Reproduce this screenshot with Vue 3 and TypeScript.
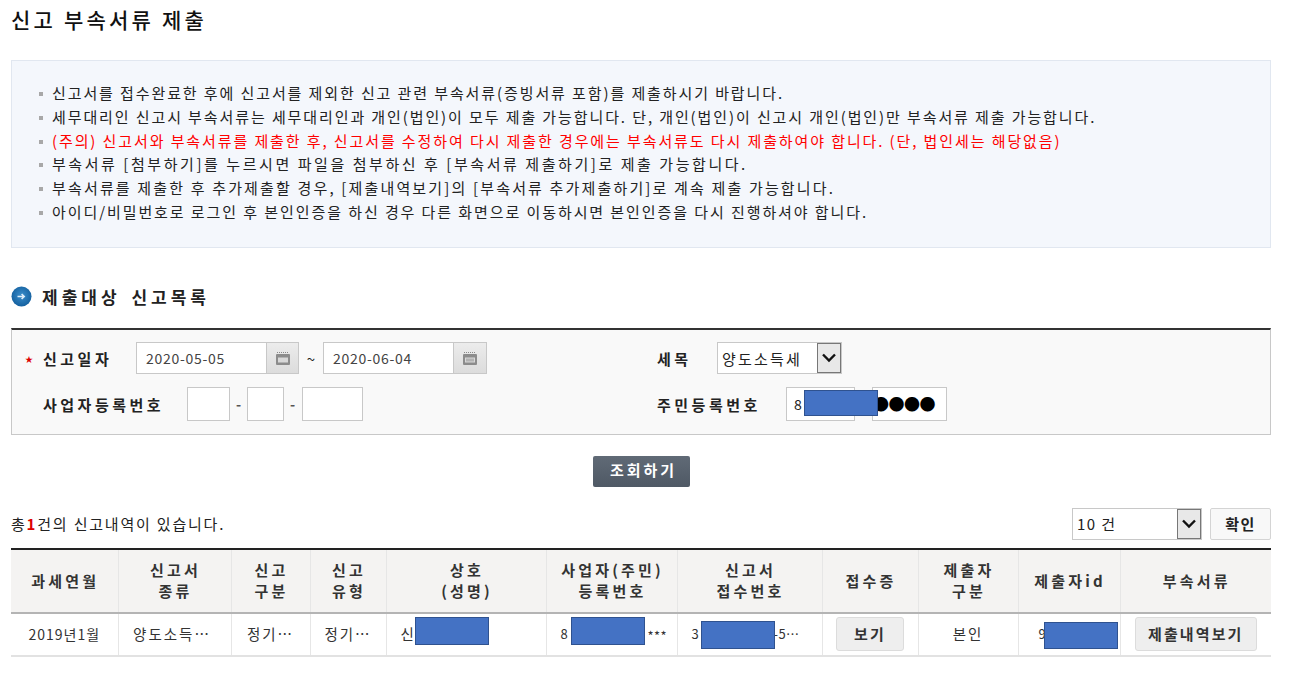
<script setup lang="ts">
interface Notice { text: string; warn?: boolean }

const notices: Notice[] = [
  { text: '신고서를 접수완료한 후에 신고서를 제외한 신고 관련 부속서류(증빙서류 포함)를 제출하시기 바랍니다.' },
  { text: '세무대리인 신고시 부속서류는 세무대리인과 개인(법인)이 모두 제출 가능합니다. 단, 개인(법인)이 신고시 개인(법인)만 부속서류 제출 가능합니다.' },
  { text: '(주의) 신고서와 부속서류를 제출한 후, 신고서를 수정하여 다시 제출한 경우에는 부속서류도 다시 제출하여야 합니다. (단, 법인세는 해당없음)', warn: true },
  { text: '부속서류 [첨부하기]를 누르시면 파일을 첨부하신 후 [부속서류 제출하기]로 제출 가능합니다.' },
  { text: '부속서류를 제출한 후 추가제출할 경우, [제출내역보기]의 [부속서류 추가제출하기]로 계속 제출 가능합니다.' },
  { text: '아이디/비밀번호로 로그인 후 본인인증을 하신 경우 다른 화면으로 이동하시면 본인인증을 다시 진행하셔야 합니다.' },
]

const columns: { label: string[]; width: number }[] = [
  { label: ['과세연월'], width: 107 },
  { label: ['신고서', '종류'], width: 113 },
  { label: ['신고', '구분'], width: 79 },
  { label: ['신고', '유형'], width: 76 },
  { label: ['상호', '(성명)'], width: 160 },
  { label: ['사업자(주민)', '등록번호'], width: 131 },
  { label: ['신고서', '접수번호'], width: 145 },
  { label: ['접수증'], width: 96 },
  { label: ['제출자', '구분'], width: 100 },
  { label: ['제출자id'], width: 102 },
  { label: ['부속서류'], width: 151 },
]
</script>

<template>
  <div class="page">
    <h1 class="title">신고 부속서류 제출</h1>

    <ul class="notice">
      <li v-for="n in notices" :key="n.text" :class="{ warn: n.warn }">{{ n.text }}</li>
    </ul>

    <h2 class="section">
      <svg width="21" height="21" viewBox="0 0 21 21">
        <defs>
          <radialGradient id="dot" cx="50%" cy="45%" r="55%">
            <stop offset="0" stop-color="#3b8ecb" />
            <stop offset="1" stop-color="#14609f" />
          </radialGradient>
        </defs>
        <circle cx="10.5" cy="10.5" r="10" fill="url(#dot)" />
        <path d="M6.5 10.5h6.5M10.6 8l2.6 2.5-2.6 2.5" fill="none" stroke="#dfeef9" stroke-width="1.6" />
      </svg>
      제출대상 신고목록
    </h2>

    <div class="search">
      <div class="search-left">
        <div class="field">
          <span class="star">★</span>
          <label class="lbl lbl-date">신고일자</label>
          <div class="date">
            <span class="date-val">2020-05-05</span>
            <span class="cal">
              <svg width="16" height="16" viewBox="0 0 16 16">
                <path d="M2 2.5h12" stroke="#888" stroke-width="1" stroke-dasharray="1 1" />
                <rect x="1" y="4" width="14" height="11" rx="1" fill="#8c8c8c" />
                <rect x="3" y="7.5" width="10" height="5" fill="#d8d8d8" />
              </svg>
            </span>
          </div>
          <span class="tilde">~</span>
          <div class="date date-end">
            <span class="date-val">2020-06-04</span>
            <span class="cal">
              <svg width="16" height="16" viewBox="0 0 16 16">
                <path d="M2 2.5h12" stroke="#888" stroke-width="1" stroke-dasharray="1 1" />
                <rect x="1" y="4" width="14" height="11" rx="1" fill="#8c8c8c" />
                <rect x="3" y="7.5" width="10" height="5" fill="#d8d8d8" />
                <path d="M5 8.5v3M7 8.5v3M9 8.5v3M11 8.5v3" stroke="#8c8c8c" stroke-width="1" />
              </svg>
            </span>
          </div>
        </div>
        <div class="field field-biz">
          <label class="lbl lbl-biz">사업자등록번호</label>
          <span class="box b1"></span>
          <span class="dash">-</span>
          <span class="box b2"></span>
          <span class="dash">-</span>
          <span class="box b3"></span>
        </div>
      </div>
      <div class="search-right">
        <div class="field">
          <label class="lbl lbl-tax">세목</label>
          <div class="select sel-tax">
            <span class="select-val">양도소득세</span>
            <span class="select-arrow">
              <svg width="16" height="10" viewBox="0 0 16 10"><path d="M2 1.5l6 6 6-6" fill="none" stroke="#111" stroke-width="2.4" /></svg>
            </span>
          </div>
        </div>
        <div class="field field-id">
          <label class="lbl lbl-id">주민등록번호</label>
          <span class="box id1">8</span>
          <span class="box id2">●●●●</span>
          <span class="mask mask-id"></span>
        </div>
      </div>
    </div>

    <div class="actions">
      <button type="button" class="btn-search">조회하기</button>
    </div>

    <div class="result-bar">
      <p class="total">총<b>1</b>건의 신고내역이 있습니다.</p>
      <div class="result-ctl">
        <div class="select sel-count">
          <span class="select-val">10 건</span>
          <span class="select-arrow">
            <svg width="16" height="10" viewBox="0 0 16 10"><path d="M2 1.5l6 6 6-6" fill="none" stroke="#111" stroke-width="2.4" /></svg>
          </span>
        </div>
        <button type="button" class="btn-ok">확인</button>
      </div>
    </div>

    <table class="list">
      <colgroup>
        <col v-for="c in columns" :key="c.label.join()" :style="{ width: c.width + 'px' }" />
      </colgroup>
      <thead>
        <tr>
          <th v-for="c in columns" :key="c.label.join()">
            <div v-for="l in c.label" :key="l">{{ l }}</div>
          </th>
        </tr>
      </thead>
      <tbody>
        <tr>
          <td class="month">2019년1월</td>
          <td class="kind">양도소득…</td>
          <td>정기…</td>
          <td>정기…</td>
          <td class="left">신<span class="mask m-name"></span></td>
          <td class="left small">8<span class="stars">***</span><span class="mask m-biz"></span></td>
          <td class="left small">3<span class="tail">-5…</span><span class="mask m-no"></span></td>
          <td><button type="button" class="btn-row btn-view">보기</button></td>
          <td>본인</td>
          <td class="left small user">9<span class="mask m-id"></span></td>
          <td><button type="button" class="btn-row btn-hist">제출내역보기</button></td>
        </tr>
      </tbody>
    </table>
  </div>
</template>

<style scoped>
.page {
  width: 1260px;
  padding-left: 11px;
  font-family: "Noto Sans CJK KR", "Noto Sans", sans-serif;
  color: #222;
  font-size: 14px;
}
.title {
  margin: 0;
  padding-top: 4px;
  height: 60px;
  box-sizing: border-box;
  font-size: 21px;
  line-height: 30px;
  font-weight: 500;
  letter-spacing: 3.2px;
  color: #111;
}
.notice {
  list-style: none;
  margin: 0;
  height: 188px;
  box-sizing: border-box;
  padding: 20px 0 0 27px;
  background: #f4f7fc;
  border: 1px solid #e1e7f0;
}
.notice li {
  position: relative;
  padding-left: 13px;
  font-size: 15px;
  line-height: 23.8px;
  letter-spacing: 1.9px;
  white-space: nowrap;
  color: #222;
}
.notice li:nth-child(4) { letter-spacing: 2.56px; }
.notice li:nth-child(5) { letter-spacing: 2.16px; }
.notice li:nth-child(6) { letter-spacing: 1.92px; }
.notice li::before {
  content: '';
  position: absolute;
  left: 0;
  top: 11px;
  width: 4px;
  height: 4px;
  background: #a8a8a8;
}
.notice li.warn { color: #f00; }
.section {
  display: flex;
  align-items: center;
  gap: 10px;
  margin: 0;
  height: 80px;
  padding-top: 17px;
  box-sizing: border-box;
  font-size: 17px;
  font-weight: 700;
  letter-spacing: 4px;
  word-spacing: 3px;
  color: #222;
}
.search {
  display: flex;
  height: 107px;
  box-sizing: border-box;
  background: #f9f9f9;
  border: 1px solid #c8c8c8;
  border-top: 2px solid #333;
  padding-top: 11px;
}
.search-left { width: 645px; padding-left: 13px; box-sizing: border-box; }
.search-right { flex: 1; }
.field { display: flex; align-items: center; height: 34px; }
.field-biz { margin-top: 12px; }
.field-id { position: relative; margin-top: 12px; }
.lbl { font-weight: 700; font-size: 15px; letter-spacing: 3.5px; color: #222; white-space: nowrap; }
.star { color: #d00; font-size: 8px; width: 18px; }
.lbl-date { width: 93px; }
.lbl-biz { width: 144px; margin-left: 18px; }
.lbl-tax { width: 60px; }
.lbl-id { width: 129px; }
.date {
  display: flex;
  height: 32px;
  box-sizing: border-box;
  border: 1px solid #c8c8c8;
  background: #fff;
}
.date-val { width: 129px; padding-left: 9px; box-sizing: border-box; font-size: 14px; letter-spacing: 0.7px; line-height: 30px; color: #444; }
.cal {
  width: 31px;
  display: flex;
  align-items: center;
  justify-content: center;
  background: linear-gradient(#ececec, #dcdcdc);
  border-left: 1px solid #c8c8c8;
}
.date-end .cal { width: 32px; }
.tilde { width: 24px; text-align: center; font-size: 15px; }
.box {
  display: block;
  height: 34px;
  box-sizing: border-box;
  border: 1px solid #c8c8c8;
  background: #fff;
}
.b1 { width: 43px; }
.b2 { width: 37px; }
.b3 { width: 61px; margin-left: 1px; }
.dash { width: 17px; text-align: center; font-weight: 700; color: #555; }
.id1 { width: 69px; padding-left: 7px; font-size: 14px; line-height: 32px; }
.id2 { width: 75px; margin-left: 17px; font-size: 16px; line-height: 31px; letter-spacing: -0.5px; color: #000; white-space: nowrap; }
.select {
  display: flex;
  align-items: center;
  box-sizing: border-box;
  border: 1px solid #c8c8c8;
  background: #fff;
}
.select-val { flex: 1; padding-left: 4px; font-size: 15px; letter-spacing: 1.4px; color: #222; }
.sel-tax .select-val { letter-spacing: 2.2px; white-space: nowrap; }
.select-arrow {
  width: 24px;
  height: 100%;
  box-sizing: border-box;
  display: flex;
  align-items: center;
  justify-content: center;
  background: #e8e8e8;
  border: 1px solid #777;
}
.sel-tax { width: 125px; height: 32px; }
.sel-count { width: 130px; height: 32px; }
.mask {
  position: absolute;
  box-sizing: border-box;
  background: #4472c4;
  border: 1px solid #2f528f;
}
.mask-id { left: 147px; top: 3px; width: 74px; height: 26px; }
.actions { display: flex; justify-content: center; margin-top: 21px; }
.btn-search {
  width: 97px;
  height: 31px;
  border: 0;
  border-radius: 2px;
  background: linear-gradient(#606a76, #4f5965);
  color: #fff;
  font: 700 15px "Noto Sans CJK KR", sans-serif;
  letter-spacing: 3px;
  padding: 0 0 4px 5px;
}
.result-bar {
  display: flex;
  align-items: center;
  justify-content: space-between;
  margin-top: 20px;
  height: 33px;
}
.total { margin: 0; font-size: 15px; letter-spacing: 1.8px; }
.total b { color: #d00; }
.result-ctl { display: flex; align-items: center; gap: 8px; }
.btn-ok {
  width: 61px;
  height: 32px;
  padding: 0;
  background: #f8f8f8;
  border: 1px solid #d4d4d4;
  border-radius: 2px;
  font: 700 15px "Noto Sans CJK KR", sans-serif;
  letter-spacing: 1.5px;
  color: #222;
}
.list {
  margin-top: 8px;
  width: 1260px;
  table-layout: fixed;
  border-collapse: collapse;
  border-top: 2px solid #222;
  border-bottom: 2px solid #e2e2e2;
}
.list th {
  height: 60px;
  padding: 0 0 2px 2px;
  background: #f4f3f2;
  border-left: 1px solid #e6e6e6;
  border-bottom: 2px solid #b4b4b4;
  font-size: 15px;
  line-height: 21px;
  font-weight: 700;
  letter-spacing: 3.2px;
  color: #333;
  white-space: nowrap;
}
.list td {
  position: relative;
  height: 39px;
  padding: 0 0 2px;
  border-left: 1px solid #e6e6e6;
  font-size: 14.5px;
  text-align: center;
  color: #333;
  letter-spacing: 2px;
}
.list th:first-child, .list td:first-child { border-left: 0; }
.list td.month { font-size: 14px; letter-spacing: 1px; }
.list td.kind { padding-right: 5px; }
.list td.left { text-align: left; padding-left: 14px; letter-spacing: 1px; }
.list td.small { font-size: 13px; letter-spacing: 0.4px; }
.list td.user { padding-left: 20px; }
.stars { position: absolute; left: 101px; top: 12px; }
.tail { position: absolute; left: 96px; top: 10px; }
.m-name { left: 28px; top: 3px; width: 74px; height: 28px; }
.m-biz { left: 24px; top: 3px; width: 74px; height: 28px; }
.m-no { left: 23px; top: 7px; width: 74px; height: 28px; }
.m-id { left: 25px; top: 8px; width: 74px; height: 27px; }
.btn-row {
  height: 34px;
  padding: 0;
  background: #eee;
  border: 1px solid #dcdcdc;
  border-radius: 3px;
  font: 700 15px "Noto Sans CJK KR", sans-serif;
  letter-spacing: 2.1px;
  color: #333;
}
.btn-view { width: 68px; }
.btn-hist { width: 122px; }
</style>

<style>
html, body { background: #fff; }
</style>
